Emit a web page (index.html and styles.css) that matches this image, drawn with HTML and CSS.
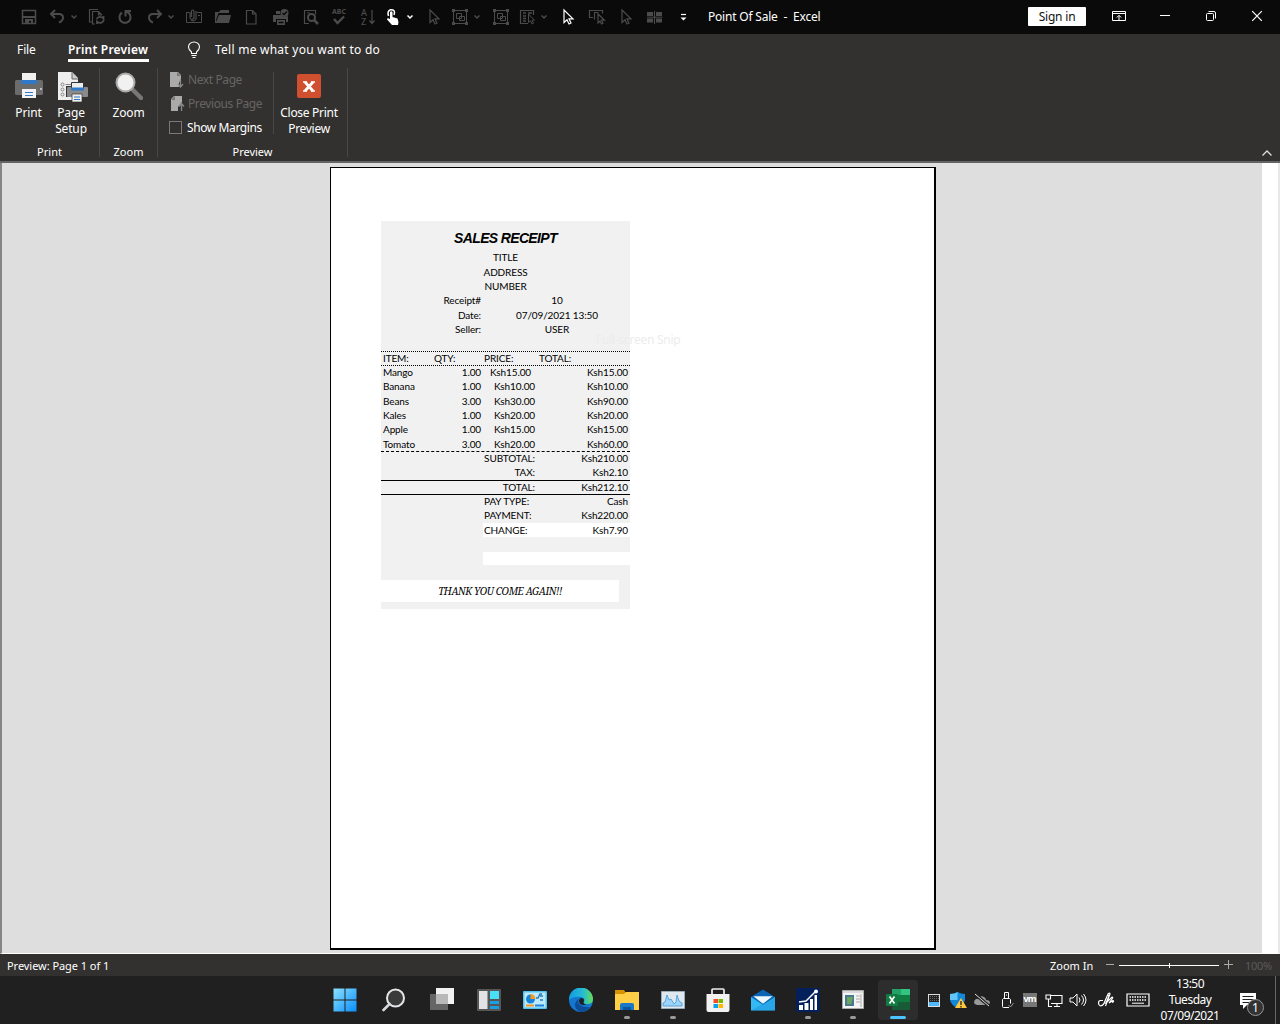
FILE: index.html
```html
<!DOCTYPE html>
<html lang="en">
<head>
<meta charset="utf-8">
<title>Point Of Sale - Excel</title>
<link rel="stylesheet" href="styles.css">
</head>
<body>
<svg class="defs" width="0" height="0">
  <symbol id="chev" viewBox="0 0 8 18"><path d="M1.500 7.500 4 10l2.500-2.500" fill="none" stroke="currentColor" stroke-width="1.500"/></symbol>
  <symbol id="cursor" viewBox="0 0 18 18"><path d="M5 2v12.500l3-2.800 2 4.300 2-1-2-4.200h4z" fill="none" stroke="currentColor" stroke-width="1.200"/></symbol>
  <symbol id="group" viewBox="0 0 18 18"><g fill="none" stroke="currentColor"><path d="M4 2.500h10M4 15.500h10M2.500 4v10M15.500 4v10"/><path d="M5.500 5.500h5v5h-5zM8.500 8.500h5v4h-5z"/></g><path fill="currentColor" d="M1 1h3v3H1zM14 1h3v3h-3zM1 14h3v3H1zM14 14h3v3h-3z"/></symbol>
</svg>
<div class="window">
<header class="titlebar">
  <div class="qat">
    <svg viewBox="0 0 18 18"><path d="M2.500 2.500h13v13h-13z" fill="none" stroke="currentColor" stroke-width="1.500"/><path fill="currentColor" d="M3 8h12v2H3zM5 11h8v5h-2v-3H9v3H5z"/></svg>
    <svg viewBox="0 0 18 18"><path d="M7 2 3 6l4 4M3.500 6H11q4 0 4 3.500T11 14.500" fill="none" stroke="currentColor" stroke-width="2"/></svg>
    <svg class="c"><use href="#chev"/></svg>
    <svg viewBox="0 0 18 18"><g fill="none" stroke="currentColor" stroke-width="1.200"><path d="M4 14H1.500V1.500H10M7 16H4.500V3.500h6L14 7M10.500 3.500V7H14"/><path d="M8.500 11q3-4 7-.5V8M16 12q-3 5-7 1.500V16" stroke-width="1.800"/></g></svg>
    <svg viewBox="0 0 18 18"><path d="M9.500 8.500V3H15M10 3.500q4.500 1.500 4.500 6a5.500 5.500 0 1 1-8.500-4.800" fill="none" stroke="currentColor" stroke-width="2"/></svg>
    <svg viewBox="0 0 18 18"><path d="m11 2 4 4-4 4M15 6H7Q3 6 3 9.500T7 14.500" fill="none" stroke="currentColor" stroke-width="2"/></svg>
    <svg class="c"><use href="#chev"/></svg>
    <svg viewBox="0 0 18 18"><g fill="none" stroke="currentColor"><path d="M4 4.500H1.500v10h15v-10H12M13 7.500h2"/><path d="M5 4v6q1.500 3 4 0V3Q7.500 1 6.500 3v6M11 3v8q-2 3-5 1" stroke-width="1.200"/></g></svg>
    <svg viewBox="0 0 18 18"><path fill="currentColor" d="M1 15V4h4l1.500-2H15v3H4.500L2 12v2l3-7h12l-2 8z"/></svg>
    <svg viewBox="0 0 18 18"><path d="M4.500 2.500h6l3.500 3.500v10H4.500zM10.500 2.500V6H14" fill="none" stroke="currentColor" stroke-width="1.200"/></svg>
    <svg viewBox="0 0 18 18"><path fill="currentColor" d="M1 7h8q2 3 7 1v6h-2v-3H4v3H1zM4 3h4v3H4zM5 12h8v5H5z"/><circle cx="12.500" cy="5" r="4" fill="currentColor"/><path d="m10.500 5 1.500 1.500 3-3M6.500 14.500h5" fill="none" stroke="#0a0a0a" stroke-width="1.300"/></svg>
    <svg viewBox="0 0 18 18"><g fill="none" stroke="currentColor" stroke-width="1.200"><path d="M7 15.500H2.500v-13h11v4M5 5h3M5 8h1"/><circle cx="9.500" cy="9.500" r="3.500" stroke-width="2"/><path d="m12 12 4 4" stroke-width="2.500"/></g></svg>
    <div class="abc"><span>ABC</span><svg viewBox="0 0 14 10"><path d="m2 4 3.500 4L12 1.500" fill="none" stroke="currentColor" stroke-width="2.400"/></svg></div>
    <div class="sort"><span>A<br>Z</span><svg viewBox="0 0 6 16"><path d="M3 1v13M.5 11.500l2.500 3 2.500-3" fill="none" stroke="currentColor" stroke-width="1.200"/></svg></div>
    <svg class="on" viewBox="0 0 18 18"><path d="M4.500 8Q3 3 6.500 1.800 12 1.500 10 7" fill="none" stroke="currentColor" stroke-width="1.500"/><path fill="currentColor" d="M6 4q1.500-1.500 2.500 0v5l5 1.500q1.500 3 .5 6.500H8L3 11.500q0-2 3-.5z"/></svg>
    <svg class="c on"><use href="#chev"/></svg>
    <svg><use href="#cursor"/></svg>
    <svg><use href="#group"/></svg>
    <svg class="c"><use href="#chev"/></svg>
    <svg><use href="#group"/></svg>
    <svg viewBox="0 0 18 18"><g fill="none" stroke="currentColor"><path d="M9 15.500H1.500v-13h13V7" stroke-width="1.200"/><path d="M4 5h3M9 5h4M4 8h3M4 10.500h3M4 13h3" stroke-width="1.600"/><path d="M9.500 6v8.500l2-1.700 1.500 3.200 1.500-.8-1.500-3h2.500z"/></g></svg>
    <svg class="c"><use href="#chev"/></svg>
    <svg class="on"><use href="#cursor"/></svg>
    <svg viewBox="0 0 18 18"><g fill="none" stroke="currentColor" stroke-width="1.200"><path d="M5 9.500H1.500v-7h13v3M6.500 11.500v-7h4"/><path d="M10 6v9l2-1.700L13.500 16l1.500-.8-1.500-3h3z"/></g></svg>
    <svg><use href="#cursor"/></svg>
    <svg viewBox="0 0 18 18"><path fill="currentColor" d="M1 4h6v4H1zM10 4h6v4h-6zM1 10.500h6v4H1zM10 10.500h6v4h-6z"/><path d="M8.500 3v13M1 9.200h15.500" stroke="currentColor"/></svg>
    <svg class="on" viewBox="0 0 18 18"><path d="M6 6.500h5" stroke="currentColor" stroke-width="1.200"/><path d="M5.500 9.500h6l-3 3z" fill="currentColor"/></svg>
  </div>
  <div class="app-title">Point Of Sale&nbsp; -&nbsp; Excel</div>
  <div class="signin">Sign in</div>
  <div class="winctl">
    <svg viewBox="0 0 14 14"><path d="M.5 2.500h13v9H.5zM.5 4.500h13M7 11V6.500M4.800 8.500 7 6.300l2.200 2.200" fill="none" stroke="#fff"/></svg>
    <svg viewBox="0 0 14 14"><path d="M2 6.500h10" stroke="#fff"/></svg>
    <svg viewBox="0 0 14 14"><rect x="2.500" y="4.500" width="7" height="7" rx="1" fill="none" stroke="#fff"/><path d="M4.500 2.500H10q1.500 0 1.500 1.500v5.500" fill="none" stroke="#fff"/></svg>
    <svg viewBox="0 0 14 14"><path d="m2.200 2.200 9.600 9.600M11.800 2.200 2.200 11.800" stroke="#fff" stroke-width="1.200"/></svg>
  </div>
</header>

<nav class="tabs">
  <div class="tab file">File</div>
  <div class="tab active">Print Preview</div>
  <svg class="bulb" viewBox="0 0 14 18"><path d="M4.500 12.500V11Q1.500 8.500 1.500 6a5.500 5 0 0 1 11 0q0 2.500-3 5v1.500zM4.500 14.500h5M5.500 16.500h3" fill="none" stroke="#fff" stroke-width="1.100"/></svg>
  <div class="tell">Tell me what you want to do</div>
</nav>

<section class="ribbon">
  <div class="group g-print">
    <div class="items">
      <div class="big b-print">
        <svg viewBox="0 0 28 28"><rect y="8" width="28" height="15" rx="1.500" fill="#6c6c6c"/><path fill="#f0f0f0" d="M7 1h14v10H7z"/><path fill="#2f79c8" d="M6 8h16v4H6z"/><path fill="#f3f3f3" d="M7 17h14v9H7z"/><path d="M10 20.500h8M10 23.500h8" stroke="#2f79c8"/><path fill="#bbb" d="M25 16h2v2h-2z"/></svg>
        <span>Print</span></div>
      <div class="big b-setup">
        <svg viewBox="0 0 32 30"><path fill="#eee" d="M2 0h14l6 6v22H2z"/><path d="M16 0v7h6" fill="#ccc" stroke="#666"/><g fill="none" stroke="#888"><circle cx="6.500" cy="12.500" r="1.500"/><circle cx="6.500" cy="17.500" r="1.500"/><circle cx="6.500" cy="22.500" r="1.500"/><path d="M9.500 12.500h6"/></g><path fill="#333" d="M10 14h22v11H10z"/><rect x="11" y="15" width="21" height="10" rx="1" fill="#8a8a8a"/><path fill="#eee" stroke="#333" d="M15.500 10.500h12v7h-12z"/><path fill="#2f79c8" d="M15 15.500h13v3H15z"/><path fill="#eee" stroke="#333" stroke-width=".7" d="M16 22h10v8H16z"/><path d="M18 25h6M18 27.500h6" stroke="#2f79c8"/></svg>
        <span>Page<br>Setup</span></div>
    </div>
    <div class="glabel">Print</div>
  </div>
  <div class="group g-zoom">
    <div class="items">
      <div class="big b-zoom">
        <svg viewBox="0 0 28 28"><path d="m18 18 8 8" stroke="#777" stroke-width="4.500" stroke-linecap="round"/><circle cx="10.500" cy="10.500" r="9" fill="#f1f1f1" stroke="#a9a9a9" stroke-width="2"/></svg>
        <span>Zoom</span></div>
    </div>
    <div class="glabel">Zoom</div>
  </div>
  <div class="group g-preview">
    <div class="items">
      <div class="small-list">
        <div class="small off"><svg viewBox="0 0 16 16"><path fill="#aaa" d="M1 0h8l3 3v4l-2 4v4H1z"/><path fill="#777" d="M8 0v4h4z"/><path d="M11.500 8v6M9 12l2.500 3 2.500-3" fill="none" stroke="#888" stroke-width="1.300"/></svg><span>Next Page</span></div>
        <div class="small off"><svg viewBox="0 0 16 16"><path fill="#aaa" d="M5 0h8v6l-4 5v4H2V3z"/><path fill="#777" d="M2 4h4V0z"/><path d="M12.500 15V8M10 10.500l2.500-3 2.500 3" fill="none" stroke="#888" stroke-width="1.300"/></svg><span>Previous Page</span></div>
        <div class="small"><i class="check"></i><span>Show Margins</span></div>
      </div>
      <div class="big b-close">
        <svg viewBox="0 0 24 24"><rect width="24" height="24" rx="2" fill="#cf4f2e"/><path d="m8 8 8 9M16 8l-8 9" stroke="#fff" stroke-width="2.800"/><path d="M6 8h4M14 8h4M6 17h4M14 17h4" stroke="#fff" stroke-width="1.500"/></svg>
        <span>Close Print<br>Preview</span></div>
    </div>
    <div class="glabel">Preview</div>
  </div>
  <svg class="collapse" viewBox="0 0 12 8"><path d="m1.500 6.500 4.500-4.500 4.500 4.500" fill="none" stroke="#ddd" stroke-width="1.300"/></svg>
</section>

<main class="canvas">
  <div class="paper">
    <div class="receipt">
      <h1>SALES RECEIPT</h1>
      <div class="row mid"><span>TITLE</span></div>
      <div class="row mid"><span>ADDRESS</span></div>
      <div class="row mid"><span>NUMBER</span></div>
      <div class="row info"><span>Receipt#</span><span>10</span></div>
      <div class="row info"><span>Date:</span><span>07/09/2021 13:50</span></div>
      <div class="row info"><span>Seller:</span><span>USER</span></div>
      <div class="row"></div>
      <div class="row head"><span>ITEM:</span><span>QTY:</span><span>PRICE:</span><span>TOTAL:</span></div>
      <div class="row item first"><span>Mango</span><span>1.00</span><span class="shift">Ksh15.00</span><span>Ksh15.00</span></div>
      <div class="row item"><span>Banana</span><span>1.00</span><span>Ksh10.00</span><span>Ksh10.00</span></div>
      <div class="row item"><span>Beans</span><span>3.00</span><span>Ksh30.00</span><span>Ksh90.00</span></div>
      <div class="row item"><span>Kales</span><span>1.00</span><span>Ksh20.00</span><span>Ksh20.00</span></div>
      <div class="row item"><span>Apple</span><span>1.00</span><span>Ksh15.00</span><span>Ksh15.00</span></div>
      <div class="row item"><span>Tomato</span><span>3.00</span><span>Ksh20.00</span><span>Ksh60.00</span></div>
      <div class="row sum dashed"><span>SUBTOTAL:</span><span>Ksh210.00</span></div>
      <div class="row sum"><span>TAX:</span><span>Ksh2.10</span></div>
      <div class="row sum total"><span>TOTAL:</span><span>Ksh212.10</span></div>
      <div class="row sum total-end"><div class="pay"><span>PAY TYPE:</span><span>Cash</span></div></div>
      <div class="row pay"><span>PAYMENT:</span><span>Ksh220.00</span></div>
      <div class="row pay white"><span>CHANGE:</span><span>Ksh7.90</span></div>
      <div class="row"></div>
      <div class="blank"></div>
      <div class="thanks"><span>THANK YOU COME AGAIN!!</span></div>
    </div>
    <div class="snip">Full-screen Snip</div>
  </div>
</main>

<footer class="status">
  <span class="page-info">Preview: Page 1 of 1</span>
  <span class="zoomin">Zoom In</span>
  <svg class="slider" viewBox="0 0 124 12"><path d="M0 5.500h8" stroke="#aaa"/><path d="M13 6.500h100M63.500 4v5" stroke="#fff"/><path d="M118 5.500h9M122.500 1v9" stroke="#aaa"/></svg>
  <span class="pct">100%</span>
</footer>

<footer class="taskbar">
  <div class="task"><svg viewBox="0 0 24 24"><defs><linearGradient id="w" x2="1" y2="1"><stop stop-color="#8be2ff"/><stop offset="1" stop-color="#0a8dfb"/></linearGradient></defs><path fill="url(#w)" d="M.5.500h11v11H.5zM12.500.500h11v11h-11zM.5 12.500h11v11H.5zM12.500 12.500h11v11h-11z"/></svg></div>
  <div class="task"><svg viewBox="0 0 24 24"><circle cx="13.500" cy="10" r="8.500" fill="#3a3a3a" stroke="#e4e6e8" stroke-width="2"/><path d="m7.500 16-6 6" stroke="#d5d8dc" stroke-width="2.600" stroke-linecap="round"/></svg></div>
  <div class="task"><svg viewBox="0 0 24 24"><path fill="#666" d="M0 6h18v16H0z"/><path fill="#f2f2f2" d="M6 0h18v16H6z"/><path fill="#b9b9b9" d="M6 6h12v10H6z"/></svg></div>
  <div class="task"><svg viewBox="0 0 24 24"><rect y="1" width="24" height="22" rx="1" fill="#565656"/><path fill="#e2e3e5" d="M2 3h8.500v18H2z"/><path fill="#47e0f8" d="M13 3h9v8h-9z"/><path fill="#1c9ee4" d="M13 13h9v3h-9zM13 18h9v3h-9z"/></svg></div>
  <div class="task"><svg viewBox="0 0 24 24"><rect y="3" width="24" height="18" rx="1" fill="#55c3f2"/><path fill="#bdeafb" d="M1.500 4.500h21v15h-21z"/><circle cx="7.500" cy="11" r="4.500" fill="#1683d8"/><path fill="#f49a22" d="M7.500 11V6a5 5 0 0 1 5 5z"/><path d="M13 10h2l2-4h2M17 12h3M17 8h3" stroke="#2879b8" stroke-width="1.400" fill="none"/><path d="M3 17.500h8" stroke="#f49a22" stroke-width="2"/><path d="M12 17.500h9" stroke="#1683d8" stroke-width="2"/></svg></div>
  <div class="task"><svg viewBox="0 0 24 24"><defs><linearGradient id="e" x2="1"><stop stop-color="#129be4"/><stop offset=".6" stop-color="#27bdd0"/><stop offset="1" stop-color="#68dc50"/></linearGradient></defs><circle cx="12" cy="12" r="12" fill="#1377cf"/><path fill="url(#e)" d="M0 12a12 12 0 0 1 24-1q0 5-5.500 5-4 0-3.500-2 1.500-4-3-5-7-1-12 3z"/><path fill="#0c4c99" d="M9 11q-1 9 12 8-4 5-9 5-7-3-6-8 1-3 3-5z"/><path fill="#202020" d="M10 13q0-3 3-3 3 1 1.500 4-.5 2 3 2.500-7 2-7.500-3.500z"/></svg></div>
  <div class="task run"><svg viewBox="0 0 24 24"><path fill="#d69200" d="M0 2h9l2 3v6H0z"/><path fill="#ffcf48" d="M0 6h9l2-2h13v18H0z"/><path fill="#1a78c9" d="M5 22v-5q0-2 2-2h10q2 0 2 2v5z"/><path fill="#0b559e" d="M8 19h8v3H8z"/></svg></div>
  <div class="task run"><svg viewBox="0 0 24 24"><path fill="#dfe7ef" stroke="#9aabb8" d="M.5 3.500h23v17H.5z"/><path fill="#9cd4fb" stroke="#3e98d6" stroke-width=".8" d="M2 18v-3l2-1 2-7 2 5 2-1 3 5 2-2 1-7 2 6 3 2v3z"/></svg></div>
  <div class="task"><svg viewBox="0 0 24 24"><path d="M6 7V2q0-1 1-1h10q1 0 1 1v5" fill="none" stroke="#eee" stroke-width="1.700"/><path fill="#f2f2f2" d="M.5 6h23v16q0 2-2 2h-19q-2 0-2-2z"/><path fill="#f04e24" d="M7.500 11H12v4H7.500z"/><path fill="#75b900" d="M12.500 11H17v4h-4.500z"/><path fill="#00a3ee" d="M7.500 16H12v4H7.500z"/><path fill="#ffb800" d="M12.500 16H17v4h-4.500z"/></svg></div>
  <div class="task"><svg viewBox="0 0 25 24"><path fill="#0b64b4" d="m0 9 12.500-8L25 9v10H0z"/><path fill="#33b9f4" d="M0 9l12.500 8L25 9v14H0z"/><path fill="#eef7fc" d="M2.500 8h20l-10 8z"/><path fill="#1689d8" d="M0 23 25 9v14z" opacity=".4"/></svg></div>
  <div class="task run"><svg viewBox="0 0 24 24"><path fill="#04205a" d="M0 0h24v24H0z"/><path fill="#fff" d="M3 17h4v5H3zM8.500 15h4v7h-4zM14 11h3v11h-3zM18.500 7h2.500v15h-2.500z"/><path d="m3 14 7-1 4-4 6-6" fill="none" stroke="#fff" stroke-width="1.500"/><circle cx="20" cy="3.500" r="2" fill="#fff"/></svg></div>
  <div class="task run"><svg viewBox="0 0 24 24"><path fill="#f4f4f4" stroke="#aaa" d="M1.500 2.500h21v18h-21z"/><path fill="#dadada" d="M2 3h20v2H2z"/><path fill="#49798e" d="M4 7h9v11H4z"/><path fill="#6ba55e" d="M6 9h6l-2 7H6z"/><path d="M15 8h4M15 11h4M15 14h4M20 6v13" stroke="#aaa"/></svg></div>
  <div class="task current"><svg viewBox="0 0 24 24"><path fill="#21a366" d="M6 1h18v7H6z"/><path fill="#33c481" d="M15 1h9v6h-9z"/><path fill="#107c41" d="M6 7h18v7H6z"/><path fill="#185c37" d="M6 14h18v8H6z"/><rect y="6" width="12" height="12" rx="1" fill="#107c41"/><path d="m3.500 8.500 5 7M8.500 8.500l-5 7" stroke="#fff" stroke-width="1.700"/></svg></div>

  <div class="tray"><svg viewBox="0 0 18 18"><path fill="#ddd" d="M3 3h12v13H3z"/><path fill="#222" d="M4 4h10v7H4z"/><path d="M5 5.500h9M5 7.500h9M5 9.500h9" stroke="#666" stroke-dasharray="1 1"/><path fill="#4fb9ff" d="M4 11h10v4H4z"/></svg></div>
  <div class="tray"><svg viewBox="0 0 18 18"><path fill="#1288d8" d="M1 3q5 0 7.500-2Q12 3 16 3v6q-1 5-7.500 8Q2 14 1 9z"/><path fill="#64c4f6" d="M1 3q5 0 7.500-2v8H1z"/><path fill="#ffc83d" d="m12 7 6 10H6z"/><path d="M12 10v4M12 15v1.500" stroke="#222" stroke-width="1.300"/></svg></div>
  <div class="tray"><svg viewBox="0 0 18 18"><path fill="#999" d="M4 14q-4-1-2.500-4.500Q3 7 5 8q2-4 6-2 2 1 2 3 4 0 4 3-1 2-3 2z"/><path d="m2 3 14 12" stroke="#202020" stroke-width="3"/><path d="m2 3 14 12" stroke="#ddd"/></svg></div>
  <div class="tray"><svg viewBox="0 0 18 18"><path d="M11 16.500H5.500q-1 0-1-1v-7l1-1h6l1 1v4M6.500 7.500v-6h4v6M8 4h1" fill="none" stroke="#fff"/><path d="m10.500 14 2 2 3-4" fill="none" stroke="#999"/></svg></div>
  <div class="tray vm"><span>vm</span></div>
  <div class="tray"><svg viewBox="0 0 18 18"><path d="M6 4.500h11v8H6M9 15.500h6M12 13v2M1 4h4.500v4H1zM3.500 8v7.500H7" fill="none" stroke="#fff" stroke-width="1.100"/></svg></div>
  <div class="tray"><svg viewBox="0 0 18 18"><path d="M1 7h3l4-4v12l-4-4H1z" fill="none" stroke="#fff"/><path d="M10 6.500q2 2.500 0 5M12.500 4.500q4 4.500 0 9M14.500 3q5 6 0 12" fill="none" stroke="#fff"/></svg></div>
  <div class="tray"><svg viewBox="0 0 18 18"><path d="M6 9.500H3.500q-2 0-2 2.500t2 3q3.500-1 4.500-5l3-7q2-2 2 0L8.500 15M11 4l1 1-3.500 8M10 11l5-5q1.500 0 0 2l-3 4 4-2.500q1.500 1-1 2" fill="none" stroke="#fff" stroke-width="1.200"/></svg></div>
  <div class="tray"><svg class="kbd" viewBox="0 0 24 14"><path d="M1 1h22v12H1z" fill="none" stroke="#fff" stroke-width="1.200"/><path d="M3.500 4h17M3.500 7h17" stroke="#fff" stroke-width="1.300" stroke-dasharray="1.500 1"/><path d="M6 10.200h12" stroke="#fff"/></svg></div>
  <div class="clock"><span>13:50</span><span>Tuesday</span><span>07/09/2021</span></div>
  <div class="tray note"><svg viewBox="0 0 26 26"><path fill="#fff" d="M2 3h16v12H9l-4 4v-4H2z"/><path d="M4.500 6.500h11M4.500 9.500h11M4.500 12.500h7" stroke="#202020"/><circle cx="17.500" cy="17.500" r="8" fill="#333" stroke="#999"/><text x="14" y="22" font-size="12" fill="#fff">1</text></svg></div>
  <div class="edge"></div>
</footer>
</div>
</body>
</html>
```
FILE: styles.css
```css
* { box-sizing: border-box; }
body { margin: 0; font-family: "Noto Sans", "Open Sans", sans-serif; font-size: 12px; color: #fff; overflow: hidden; }
.defs { position: absolute; }
.window { width: 1280px; height: 1024px; display: flex; flex-direction: column; }
svg { display: block; flex: none; }

.titlebar { height: 34px; background: #0a0a0a; display: flex; align-items: center; }
.qat { padding-left: 20px; width: 708px; flex: none; color: #4b4b4b; display: grid; align-items: center;
  grid-template-columns: 28px 22px 18px 28px 30px 21px 18px 29px 28px 30px 30px 28px 29px 25px 22px 19px 26px 22px 19px 27px 21px 19px 29px 29px 29px 29px 33px; }
.qat svg { width: 18px; height: 18px; }
.qat .c { width: 8px; }
.qat .on { color: #fff; }
.qat .abc { width: 18px; display: flex; flex-direction: column; align-items: center; font-size: 7px; font-weight: 700; line-height: 7px; padding-bottom: 1px; }
.qat .abc svg { width: 14px; height: 10px; }
.qat .sort { display: flex; gap: 2px; padding-left: 2px; font-size: 9px; font-weight: 500; line-height: 9px; }
.qat .sort span { width: 6px; }
.qat .sort svg { width: 6px; height: 16px; margin-top: 1px; }
.app-title { width: 320px; white-space: nowrap; padding-bottom: 2px; letter-spacing: -.2px; }
.signin { width: 58px; height: 19px; background: #fff; color: #111; border-radius: 1px; text-align: center; line-height: 19px; margin-bottom: 1px; letter-spacing: -.2px; }
.winctl { display: grid; grid-template-columns: 46px 46px 46px 46px; padding-left: 10px; padding-bottom: 2px; }
.winctl svg { width: 14px; height: 14px; margin-left: 16px; }

.tabs { height: 31px; background: #33312f; display: flex; align-items: flex-start; white-space: nowrap; }
.tab { height: 28px; line-height: 31px; }
.file { margin-left: 17px; width: 51px; letter-spacing: -.1px; }
.active { width: 81px; font-weight: 600; border-bottom: 3px solid #fff; letter-spacing: .2px; }
.bulb { width: 14px; height: 18px; margin: 7px 14px 0 38px; }
.tell { line-height: 31px; letter-spacing: .25px; }

.ribbon { height: 98px; background: #33312f; border-bottom: 2px solid #646464; display: flex; padding-top: 3px; }
.group { height: 89px; border-right: 1px solid #4a4846; display: flex; flex-direction: column; }
.g-print { width: 100px; }
.g-zoom { width: 58px; }
.g-preview { width: 190px; }
.items { display: flex; height: 80px; flex: none; }
.glabel { height: 9px; line-height: 8px; text-align: center; font-size: 11px; }
.big { display: flex; flex-direction: column; align-items: center; text-align: center; line-height: 16px; white-space: nowrap; letter-spacing: -.15px; }
.big svg { margin-bottom: 5px; }
.b-print { width: 43px; margin-left: 7px; padding-top: 4px; }
.b-print svg { width: 28px; height: 28px; }
.b-setup { width: 42px; padding-top: 4px; }
.b-setup svg { width: 32px; height: 30px; margin-bottom: 3px; margin-left: 2px; }
.b-zoom { width: 57px; padding-top: 4px; }
.b-zoom svg { width: 28px; height: 28px; }
.small-list { width: 116px; border-right: 1px solid #4a4846; padding-left: 11px; display: flex; flex-direction: column; margin-top: 4px; height: 62px; }
.small { height: 24px; flex: none; display: flex; align-items: flex-start; line-height: 16px; white-space: nowrap; gap: 3px; letter-spacing: -.4px; }
.small svg { width: 16px; height: 16px; }
.off { color: #676563; }
.check { width: 13px; height: 13px; border: 1px solid #7b7977; margin: 1px 2px 0 0; }
.b-close { width: 70px; padding-top: 6px; letter-spacing: -.3px; }
.b-close svg { width: 24px; height: 24px; margin-bottom: 7px; }
.collapse { width: 12px; height: 8px; margin: 81px 7px 0 auto; }

.canvas { height: 791px; background: #dedede; border-left: 2px solid #858585; border-right: 2px solid #e8e8e8; border-bottom: 1px solid #fff; display: flex; padding: 4px 0 0 328px; background-image: linear-gradient(#fff, #fff); background-size: 16px 100%; background-position: right top; background-repeat: no-repeat; }
.paper { width: 606px; height: 783px; border: 1px solid #000; border-right-width: 2px; border-bottom-width: 2px; background: #fff; position: relative; padding: 53px 0 0 50px; }
.receipt { width: 249px; height: 388px; background: #f1f1f1; color: #000; font: 10px/14.350px Lato, sans-serif; letter-spacing: -.12px; display: flex; flex-direction: column; white-space: nowrap; }
.receipt h1 { margin: 0; height: 29.200px; flex: none; padding-top: 1px; font: italic bold 14px/32px "Liberation Sans", sans-serif; text-align: center; letter-spacing: -.65px; color: #000; }
.row { height: 14.350px; flex: none; display: grid; line-height: 15px; }
.mid { text-align: center; }
.info { grid-template-columns: 100px 149px; }
.info span:first-child { text-align: right; }
.info span:last-child { text-align: center; padding-left: 3px; }
.head, .item { padding-left: 2px; }
.head { grid-template-columns: 51px 50px 55px 91px; border-top: 1px dotted #000; }
.item { grid-template-columns: 50px 48px 54px 93px; }
.first { border-top: 1px dotted #000; }
.item span:not(:first-child) { text-align: right; }
.item .shift { padding-right: 4px; }
.sum { grid-template-columns: 154px 93px; text-align: right; }
.dashed { border-top: 1px dashed #000; }
.total { border-top: 1px solid #000; }
.total-end { display: block; border-top: 1px solid #000; text-align: left; }
.pay { display: grid; grid-template-columns: 52px 92px; padding-left: 1px; margin-left: 102px; }
.pay span:last-child { text-align: right; }
.head, .first, .dashed, .total, .total-end { line-height: 13.500px; }
.white { background: #fff; }
.blank { height: 13px; flex: none; margin: .4px 0 15px 102px; background: #fff; }
.thanks { width: 238px; height: 22px; flex: none; background: #fff; text-align: center; font: italic 10px/22px "Noto Serif", "Liberation Serif", serif; letter-spacing: -.4px; }
.snip { position: absolute; left: 265px; top: 164px; color: #ececec; line-height: 16px; white-space: nowrap; letter-spacing: -.25px; }

.status { height: 22px; background: #33312f; display: flex; align-items: center; font-size: 11px; padding-left: 7px; white-space: nowrap; }
.page-info { width: 1043px; letter-spacing: -.05px; }
.zoomin { width: 56px; }
.slider { width: 124px; height: 12px; overflow: visible; }
.pct { color: #5c5a58; margin-left: 15px; letter-spacing: -.3px; }

.taskbar { height: 48px; background: #202020; padding-left: 320px; display: grid; align-items: center;
  grid-template-columns: 49px 50px 46px 47px 46px 46px 46px 45px 46px 44px 45px 45px 46px 25px 24px 24px 25px 21px 27px 21px 36px 27px 78px 42px 9px; }
.task { height: 48px; display: flex; flex-direction: column; align-items: center; padding-top: 12px; gap: 4px; }
.task svg { width: 24px; height: 24px; }
.run::after { content: ""; width: 6px; height: 3px; border-radius: 2px; background: #999; }
.current { width: 40px; height: 40px; margin-left: 3px; padding-top: 8px; background: #2d2d2d; border-radius: 4px; }
.current::after { content: ""; width: 16px; height: 3px; border-radius: 2px; background: #4cc2ff; }
.tray { display: flex; justify-content: center; }
.tray svg { width: 18px; height: 18px; }
.tray .kbd { width: 24px; height: 14px; }
.vm span { width: 14px; height: 14px; background: #777; font-size: 9px; font-weight: 700; line-height: 11px; text-align: center; letter-spacing: -1px; }
.clock { display: flex; flex-direction: column; align-items: center; line-height: 16px; letter-spacing: -.5px; }
.note svg { width: 26px; height: 26px; margin-left: 2px; margin-top: 5px; }
.edge { width: 1px; height: 48px; background: #666; margin-left: 4px; }
```
